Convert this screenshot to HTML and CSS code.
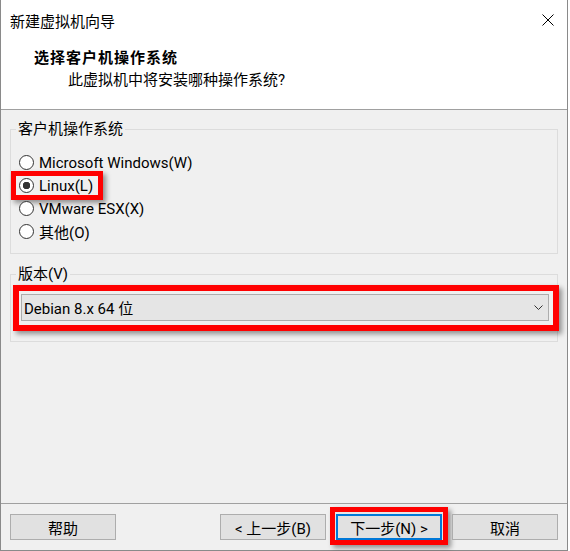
FILE: index.html
```html
<!DOCTYPE html>
<html>
<head>
  <meta charset="utf-8">
  <title>新建虚拟机向导</title>
  <link rel="stylesheet" href="styles.css">
</head>

<body>
  <div class="window">
    <div class="titlebar">
      <span class="title">新建虚拟机向导</span>
      <svg class="close" width="12" height="12" viewBox="0 0 12 12">
        <path d="M0.5 0.5L11.5 11.5M11.5 0.5L0.5 11.5" stroke="#000" stroke-width="1" fill="none"/>
      </svg>
    </div>

    <div class="header">
      <div class="heading">选择客户机操作系统</div>
      <div class="subheading">此虚拟机中将安装哪种操作系统?</div>
    </div>

    <div class="content">
      <fieldset class="group os">
        <legend>客户机操作系统</legend>
        <div class="option"><span class="radio"></span><span>Microsoft Windows(W)</span></div>
        <div class="option"><span class="pick"><span class="radio checked"></span><span>Linux(L)</span></span></div>
        <div class="option"><span class="radio"></span><span>VMware ESX(X)</span></div>
        <div class="option"><span class="radio"></span><span>其他(O)</span></div>
      </fieldset>

      <fieldset class="group version">
        <legend>版本(V)</legend>
        <div class="mark">
          <div class="combo">
            <span>Debian 8.x 64 位</span>
            <svg width="9" height="5" viewBox="0 0 9 5">
              <polyline points="0.5,0.5 4.5,4.5 8.5,0.5" stroke="#333" stroke-width="1" fill="none"/>
            </svg>
          </div>
        </div>
      </fieldset>
    </div>

    <div class="footer">
      <button class="btn help">帮助</button>
      <button class="btn">&lt; 上一步(B)</button>
      <button class="btn primary">下一步(N) &gt;</button>
      <button class="btn">取消</button>
    </div>
  </div>
</body>

</html>
```

FILE: styles.css
```css
body {
  margin: 0;
  background: #fff;
  font-family: Roboto, "Noto Sans CJK SC", sans-serif;
  font-size: 15px;
  color: #000;
}

.window {
  box-sizing: border-box;
  width: 568px;
  height: 551px;
  border: 1px solid #8a8a8a;
  border-top: none;
  display: flex;
  flex-direction: column;
}

.titlebar {
  height: 40px;
  display: flex;
  align-items: center;
  justify-content: space-between;
  padding: 0 13px 0 9px;
  background: #fff;
}

.header {
  height: 70px;
  background: #fff;
  border-bottom: 1px solid #a0a0a0;
  box-shadow: 0 1px 0 #fff;
  padding: 7px 0 0 33px;
  box-sizing: border-box;
  line-height: 22px;
}

.heading {
  font-weight: bold;
  letter-spacing: 1px;
}

.subheading {
  padding-left: 34px;
}

.content {
  flex: 1;
  background: #f0f0f0;
  padding: 9px 9px 0;
}

.group {
  margin: 0;
  padding: 0;
  border: 1px solid #dcdcdc;
}

.group legend {
  margin-left: 5px;
  padding: 0 2px;
  line-height: 20px;
}

.os {
  padding: 12px 0 10px;
}

.option {
  height: 23px;
  display: flex;
  align-items: center;
  padding-left: 8px;
}

.radio {
  box-sizing: border-box;
  width: 15px;
  height: 15px;
  border: 1px solid #333;
  border-radius: 50%;
  background: #fff;
  margin-right: 5px;
  flex: none;
}

.radio.checked {
  background: radial-gradient(circle, #333 3.5px, #fff 4px);
}

.pick {
  display: inline-flex;
  align-items: center;
  height: 19px;
  margin-left: -3px;
  padding: 0 5px 0 3px;
  box-shadow: 0 0 0 5px #f00, 3px 3px 5px 5px rgba(0, 0, 0, .4);
}

.version {
  margin-top: 10px;
  padding: 7px 0 16px;
}

.mark {
  margin: 0 4px 0 8px;
  padding: 3px 4px 4px 2px;
  box-shadow: 0 0 0 6px #f00, 3px 3px 5px 6px rgba(0, 0, 0, .4);
}

.combo {
  box-sizing: border-box;
  height: 27px;
  border: 1px solid #adadad;
  background: #e5e5e5;
  display: flex;
  align-items: center;
  justify-content: space-between;
  padding: 0 5px 0 2px;
}

.footer {
  display: flex;
  gap: 10px;
  background: #f0f0f0;
  border-top: 1px solid #a0a0a0;
  padding: 10px 9px;
}

.btn {
  box-sizing: border-box;
  width: 106px;
  height: 26px;
  margin: 0;
  padding: 0;
  font-family: inherit;
  font-size: 15px;
  color: #000;
  background: #e1e1e1;
  border: 1px solid #adadad;
}

.help {
  margin-right: auto;
}

.primary {
  border: 2px solid #0078d7;
  box-shadow: 0 -1px 0 1px #e6e6e6, 0 -1px 0 6px #f00, 3px 2px 5px 6px rgba(0, 0, 0, .4);
}
```
